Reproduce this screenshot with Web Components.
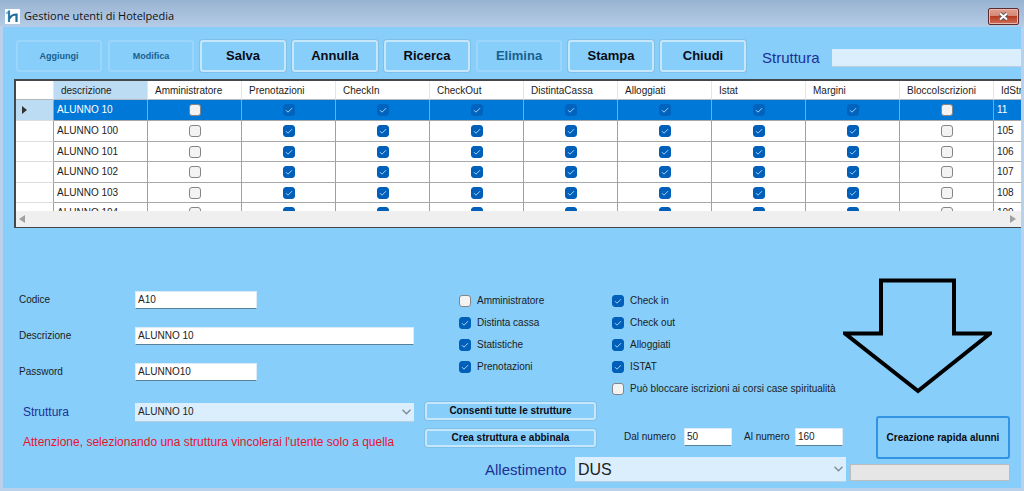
<!DOCTYPE html>
<html lang="it">
<head>
<meta charset="utf-8">
<title>Gestione utenti di Hotelpedia</title>
<style>
  html, body { margin: 0; min-height: 100%; }
  body { background: #b9d1ea; font-family: "Liberation Sans", Arial, sans-serif; color: #1c1c1c; }
</style>
</head>
<body>
<hp-window caption="Gestione utenti di Hotelpedia">
  <hp-toolbar></hp-toolbar>
  <hp-users-grid></hp-users-grid>
  <hp-user-form></hp-user-form>
</hp-window>
<script>
class Base extends HTMLElement {
  connectedCallback() {
    if (this.shadowRoot) return;
    this.attachShadow({ mode: 'open' }).innerHTML =
      '<style>:host, * { box-sizing: border-box; } ' + this.css() + '</style>' + this.html();
  }
  css() { return ''; }
  html() { return '<slot></slot>'; }
  at(name, fallback = '') { return this.getAttribute(name) ?? fallback; }
}

customElements.define('hp-window', class extends Base {
  css() { return `
    :host { display: flex; flex-direction: column; min-height: 100vh; }
    header { display: flex; align-items: center; height: 27px; padding: 5px 5px 0 5px; gap: 4px;
      background: linear-gradient(#98b3d2, #b5cce6); }
    h1 { margin: 0; flex: 1; font: 11px/16px "Open Sans", "Noto Sans", sans-serif; color: #111; white-space: nowrap; }
    .logo { width: 15px; height: 15px; flex: none; }
    button { width: 31px; height: 17px; padding: 0; display: grid; place-items: center; border: 1px solid #5c2c30; border-radius: 2px;
      background: linear-gradient(#e0a090, #d48876 45%, #b83c22 50%, #d0705a); box-shadow: inset 0 0 0 1px #e8b8ac; }
    main { flex: 1; margin: 0 3px 3px; background: #87cefa; overflow: hidden; }`; }
  html() { return `
    <header>
      <svg class="logo" viewBox="0 0 15 15" aria-hidden="true"><rect width="15" height="15" fill="#fff"/>
        <path d="M1 4.500 3.500 3" fill="none" stroke="#7db4d2" stroke-width="2"/>
        <path d="M4 1.500V13" fill="none" stroke="#2b7fae" stroke-width="2.200"/>
        <path d="M4.500 9.500C6 6.500 8 5.500 11.500 5.500V13" fill="none" stroke="#1f6c9b" stroke-width="2.200"/></svg>
      <h1>${this.at('caption')}</h1>
      <button type="button" aria-label="Chiudi finestra"><svg width="11" height="9" viewBox="0 0 11 9"><path d="M2 1.500 9 7.500M9 1.500 2 7.500" stroke="#655" stroke-width="4"/><path d="M2 1.500 9 7.500M9 1.500 2 7.500" stroke="#fff" stroke-width="2"/></svg></button>
    </header>
    <main><slot></slot></main>`; }
});

customElements.define('hp-button', class extends Base {
  css() { return `
    :host { display: block; }
    button { width: 100%; height: 100%; padding: 0; font: bold var(--button-size, 9px)/12px "Liberation Sans", Arial, sans-serif; color: #0b0b14;
      background: #87cefa; border: 2px solid #c6e6fb; border-radius: 3px; white-space: nowrap; box-shadow: 0 0 0 1px #7fc0e8; }
    :host([large]) button { font-size: 13px; line-height: 16px; }
    button:disabled { color: #17608f; border-color: #9bd5fa; box-shadow: none; }
    :host([focused]) button { border-color: #3093e4; box-shadow: none; }`; }
  html() { return `<button type="button" ${this.hasAttribute('disabled') ? 'disabled' : ''}><slot></slot></button>`; }
});

customElements.define('hp-select', class extends Base {
  css() { return `
    :host { display: flex; align-items: center; }
    label { flex: none; color: #1d3094; font-size: var(--label-size, 15px); line-height: 20px; width: var(--label-width, auto); }
    select { appearance: none; flex: 1; min-width: 0; height: var(--select-height, 18px); margin: 0; padding: 0 20px 0 3px; border: 0; border-radius: 0;
      border-bottom: 1px solid #b8cfdf; color: #222; font: var(--select-size, 10px) "Liberation Sans", Arial, sans-serif; opacity: 1;
      background: #dbeefd; }
    :host([chevron]) select { background: #dbeefd url("data:image/svg+xml,%3Csvg xmlns='http://www.w3.org/2000/svg' width='9' height='6'%3E%3Cpath d='M.5 .8 4.500 4.800 8.500 .8' fill='none' stroke='%23808890' stroke-width='1.300'/%3E%3C/svg%3E") no-repeat right 3px center; }`; }
  html() { return `<label for="s">${this.at('label')}</label><select id="s"><option>${this.at('value')}</option></select>`; }
});

customElements.define('hp-field', class extends Base {
  css() { return `
    :host { display: flex; align-items: center; }
    label { flex: none; width: var(--label-width, auto); padding-left: var(--label-pad, 0); font-size: 10px; line-height: 16px; white-space: nowrap; }
    input { width: var(--input-width, 100%); min-width: 0; height: 18px; margin: 0; padding: 0 0 1px 2px; border: 1px solid #d9ecf8; border-bottom-color: #5c7f98;
      border-radius: 0; background: #fff; color: #222; font: 10px "Liberation Sans", Arial, sans-serif; }`; }
  html() { return `<label for="i">${this.at('label')}</label><input id="i" type="text" value="${this.at('value')}">`; }
});

const CHECK_CSS = `
  input[type=checkbox] { appearance: none; flex: none; display: block; width: 12px; height: 12px; margin: 0; border: 1px solid #858585; border-radius: 3px; background: #f3f3f3; }
  input[type=checkbox]:checked { border-color: #005fb8; background: #005fb8 url("data:image/svg+xml,%3Csvg xmlns='http://www.w3.org/2000/svg' width='10' height='10'%3E%3Cpath d='M2 5.200 4 7.200 8 3.200' fill='none' stroke='%23a9d2f6' stroke-width='1'/%3E%3C/svg%3E") center no-repeat; }`;

customElements.define('hp-check', class extends Base {
  css() { return `
    :host { display: block; }
    label { display: flex; align-items: center; gap: 6px; height: 22px; font-size: 10px; line-height: 16px; white-space: nowrap; }` + CHECK_CSS; }
  html() { return `<label><input type="checkbox" ${this.hasAttribute('checked') ? 'checked' : ''}><slot></slot></label>`; }
});

customElements.define('hp-toolbar', class extends Base {
  css() { return `
    :host { display: flex; align-items: center; gap: 6px; height: 52px; padding: 6px 0 0 13px; }
    hp-button { flex: none; width: 86px; height: 32px; }
    hp-select { flex: 1; margin-left: 10px; --label-width: 70px; padding-top: 4px; }`; }
  html() { return `
    <hp-button disabled>Aggiungi</hp-button><hp-button disabled>Modifica</hp-button>
    <hp-button large>Salva</hp-button><hp-button large>Annulla</hp-button><hp-button large>Ricerca</hp-button>
    <hp-button large disabled>Elimina</hp-button><hp-button large>Stampa</hp-button><hp-button large>Chiudi</hp-button>
    <hp-select label="Struttura" value=""></hp-select>`; }
});

customElements.define('hp-users-grid', class extends Base {
  css() { return `
    :host { display: block; margin-left: 11px; border: solid #43474c; border-width: 2px 0 1px 2px; background: #fff; }
    .view { height: 130px; overflow: hidden; }
    table { table-layout: fixed; width: 1070px; border-collapse: separate; border-spacing: 0; font-size: 10px; line-height: 14px; }
    th, td { padding: 0; text-align: left; white-space: nowrap; overflow: hidden; }
    thead th { height: 19px; padding: 2px 0 0 7px; font-weight: normal; border-right: 1px solid #e2e6ea; border-bottom: 1px solid #b4b8bc; }
    tbody th, td { height: 21px; border-bottom: 1px solid #a8a8a8; border-right: 1px solid #a0a0a0; }
    tbody tr:nth-child(2n+3) > * { height: 20px; }
    tbody th { border-bottom-color: #dedede; }
    thead th:nth-child(2) { background: #bcdcf4; }
    td { padding-left: 3px; }
    td.c { padding: 0; }
    td.c input { margin: 0 auto !important; }
    tr.sel td { background: #0078d7; color: #fff; }
    tr.sel th { background: #bcdcf4; }
    tr.sel svg { display: block; margin-left: 6px; }
    ${CHECK_CSS}
    tr.sel input:checked { border-color: #0063bd; background-color: #0063bd; }
    .bar { display: flex; justify-content: space-between; align-items: center; height: 16px; padding: 0 5px 0 3px; background: #efefef; }`; }
  html() {
    const heads = ['descrizione', 'Amministratore', 'Prenotazioni', 'CheckIn', 'CheckOut', 'DistintaCassa', 'Alloggiati', 'Istat', 'Margini', 'BloccoIscrizioni', 'IdStruttura'];
    const rows = [['ALUNNO 10', 11], ['ALUNNO 100', 105], ['ALUNNO 101', 106], ['ALUNNO 102', 107], ['ALUNNO 103', 108], ['ALUNNO 104', 109]];
    const body = rows.map(([name, id], r) => `<tr class="${r ? '' : 'sel'}"><th scope="row" aria-label="${name}">${r ? '' :
      '<svg width="5" height="8" viewBox="0 0 5 8"><path d="M0 0 5 4 0 8z" fill="#333"/></svg>'}</th><td>${name}</td>` +
      heads.slice(1, 10).map((h, i) => `<td class="c"><input type="checkbox" aria-label="${h}" ${i && i < 8 ? 'checked' : ''}></td>`).join('') +
      `<td>${id}</td></tr>`).join('');
    return `<div class="view"><table><colgroup><col style="width:38px"><col span="10" style="width:94px"><col></colgroup>
      <thead><tr><th></th>${heads.map(h => `<th scope="col">${h}</th>`).join('')}</tr></thead><tbody>${body}</tbody></table></div>
      <div class="bar"><svg width="6" height="8"><path d="M6 0V8L0 4z" fill="#a0a0a0"/></svg><svg width="6" height="8"><path d="M0 0V8L6 4z" fill="#a0a0a0"/></svg></div>`;
  }
});

customElements.define('hp-user-form', class extends Base {
  css() { return `
    :host { display: grid; grid-template-columns: minmax(0, 410fr) minmax(0, 425fr) minmax(0, 160fr); padding: 50px 11px 5px 12px; --button-size: 10px; }
    .fields { display: flex; flex-direction: column; padding: 13px 11px 0 0; --label-width: 120px; --label-pad: 4px; }
    .fields hp-field { margin-bottom: 18px; }
    .short { --input-width: 122px; }
    .fields hp-select { margin-top: 3px; --label-size: 12px; --label-width: 112px; --select-height: 19px; padding-left: 8px; }
    p { margin: 10px 0 0 8px; font-size: 12px; line-height: 20px; color: #e8142c; white-space: nowrap; }
    .checks { display: grid; grid-template-columns: 153px 1fr; padding: 12px 0 0 34px; }
    .checks div { display: flex; flex-direction: column; }
    .mid { display: grid; grid-template-columns: 171px 1fr; }
    .stack { display: grid; gap: 9px; padding-bottom: 1px; }
    .stack hp-button { height: 18px; }
    .nums { display: flex; align-items: flex-end; padding-left: 28px; gap: 12px; --input-width: 48px; }
    .nums hp-field:first-child { --label-width: 60px; }
    .nums hp-field:last-child { --label-width: 51px; }
    .set { margin: 11px 4px 0 60px; --label-width: 90px; --select-height: 25px; --select-size: 16px; }
    .quick { display: flex; flex-direction: column; }
    .arrow { width: 149px; height: 116px; margin-left: -7px; }
    .quick hp-button { height: 43px; margin: 22px 0 5px 26px; }
    .progress { height: 17px; border: 1px solid #bcbcbc; background: #e6e6e6; }`; }
  html() { return `
    <section class="fields">
      <hp-field class="short" label="Codice" value="A10"></hp-field>
      <hp-field label="Descrizione" value="ALUNNO 10"></hp-field>
      <hp-field class="short" label="Password" value="ALUNNO10"></hp-field>
      <hp-select chevron label="Struttura" value="ALUNNO 10"></hp-select>
      <p>Attenzione, selezionando una struttura vincolerai l'utente solo a quella</p>
    </section>
    <section>
      <div class="checks">
        <div><hp-check>Amministratore</hp-check><hp-check checked>Distinta cassa</hp-check><hp-check checked>Statistiche</hp-check><hp-check checked>Prenotazioni</hp-check></div>
        <div><hp-check checked>Check in</hp-check><hp-check checked>Check out</hp-check><hp-check checked>Alloggiati</hp-check><hp-check checked>ISTAT</hp-check><hp-check>Può bloccare iscrizioni ai corsi case spiritualità</hp-check></div>
      </div>
      <div class="mid">
        <div class="stack"><hp-button>Consenti tutte le strutture</hp-button><hp-button>Crea struttura e abbinala</hp-button></div>
        <div class="nums"><hp-field label="Dal numero" value="50"></hp-field><hp-field label="Al numero" value="160"></hp-field></div>
      </div>
      <hp-select class="set" chevron label="Allestimento" value="DUS"></hp-select>
    </section>
    <section class="quick">
      <svg class="arrow" viewBox="0 0 149 116" aria-hidden="true"><path d="M38 2.500H111V55.500H147L75 113 2 55.500H38Z" fill="none" stroke="#000" stroke-width="4"/></svg>
      <hp-button focused>Creazione rapida alunni</hp-button>
      <div class="progress" role="progressbar" aria-label="Avanzamento"></div>
    </section>`; }
});
</script>
</body>
</html>
